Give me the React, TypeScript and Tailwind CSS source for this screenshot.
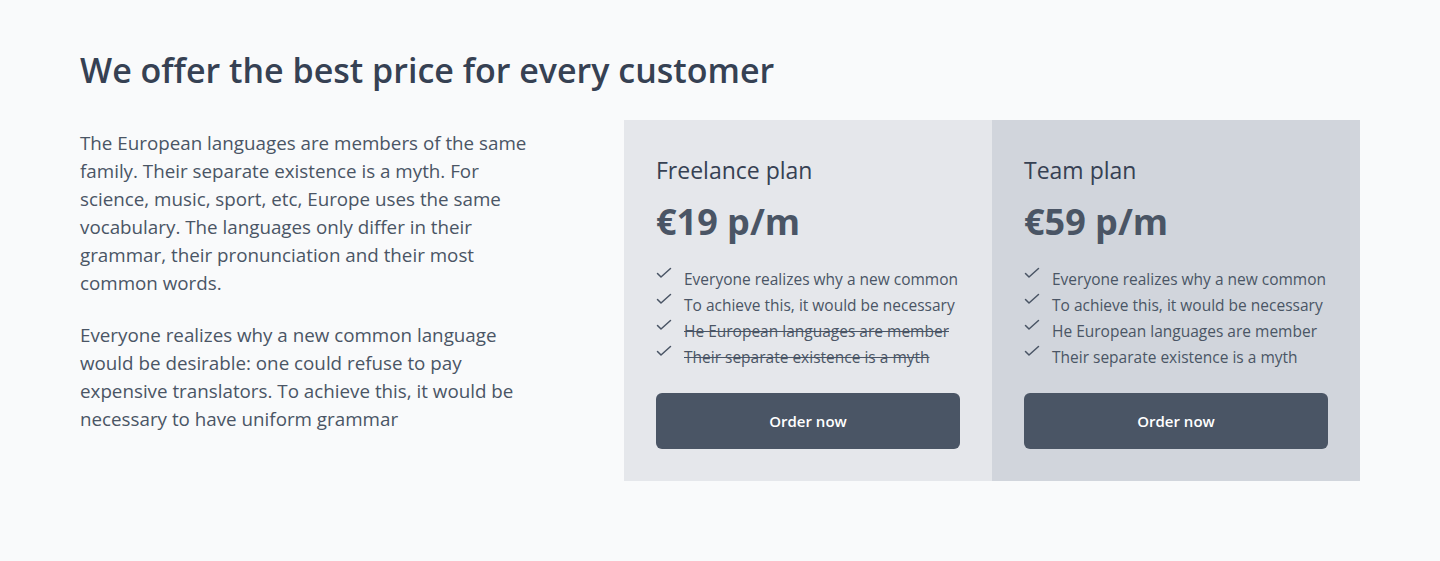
import React from "react";

const Check = () => (
  <svg viewBox="0 0 16 16" className="w-4 h-4 mt-[1px] shrink-0" fill="none" stroke="currentColor" strokeWidth={1.5} strokeLinecap="round" strokeLinejoin="round">
    <path d="M1.5 6.5 L5 10 L14.5 1.5" />
  </svg>
);

type Item = { text: string; off?: boolean };

const Plan = ({ title, price, items, bg }: { title: string; price: string; items: Item[]; bg: string }) => (
  <div className={`${bg} w-[368px] p-8 flex flex-col`}>
    <h3 className="text-[23px] leading-8 font-medium text-gray-700 pt-[2px]">{title}</h3>
    <div className="mt-4 text-4xl leading-10 font-bold text-gray-600">{price}</div>
    <ul className="mt-6 flex flex-col">
      {items.map((it) => (
        <li key={it.text} className="flex items-start gap-3 text-[15.5px] leading-[26px] text-gray-600 whitespace-nowrap">
          <Check />
          <span className={it.off ? "line-through" : ""}>{it.text}</span>
        </li>
      ))}
    </ul>
    <button className="mt-[23px] h-14 w-full rounded-md bg-gray-600 text-white font-semibold text-[15px]">Order now</button>
  </div>
);

const p1 = [
  "The European languages are members of the same",
  "family. Their separate existence is a myth. For",
  "science, music, sport, etc, Europe uses the same",
  "vocabulary. The languages only differ in their",
  "grammar, their pronunciation and their most",
  "common words.",
];
const p2 = [
  "Everyone realizes why a new common language",
  "would be desirable: one could refuse to pay",
  "expensive translators. To achieve this, it would be",
  "necessary to have uniform grammar",
];

export default function App() {
  const base: Item[] = [
    { text: "Everyone realizes why a new common" },
    { text: "To achieve this, it would be necessary" },
    { text: "He European languages are member" },
    { text: "Their separate existence is a myth" },
  ];
  return (
    <div className="min-h-[561px] bg-gray-50 px-20 pt-[50px] pb-20" style={{ fontFamily: '"Open Sans", sans-serif' }}>
      <h2 className="text-[34px] leading-10 font-semibold text-gray-700">We offer the best price for every customer</h2>
      <div className="mt-[30px] flex justify-between">
        <div className="w-[480px] pt-[9px] text-[18.8px] leading-7 text-gray-600">
          <p className="mb-6">
            {p1.map((l) => (
              <span key={l} className="block whitespace-nowrap">{l}</span>
            ))}
          </p>
          <p>
            {p2.map((l) => (
              <span key={l} className="block whitespace-nowrap">{l}</span>
            ))}
          </p>
        </div>
        <div className="flex">
          <Plan
            title="Freelance plan"
            price="€19 p/m"
            bg="bg-gray-200"
            items={base.map((b, i) => ({ ...b, off: i >= 2 }))}
          />
          <Plan title="Team plan" price="€59 p/m" bg="bg-gray-300" items={base} />
        </div>
      </div>
    </div>
  );
}
